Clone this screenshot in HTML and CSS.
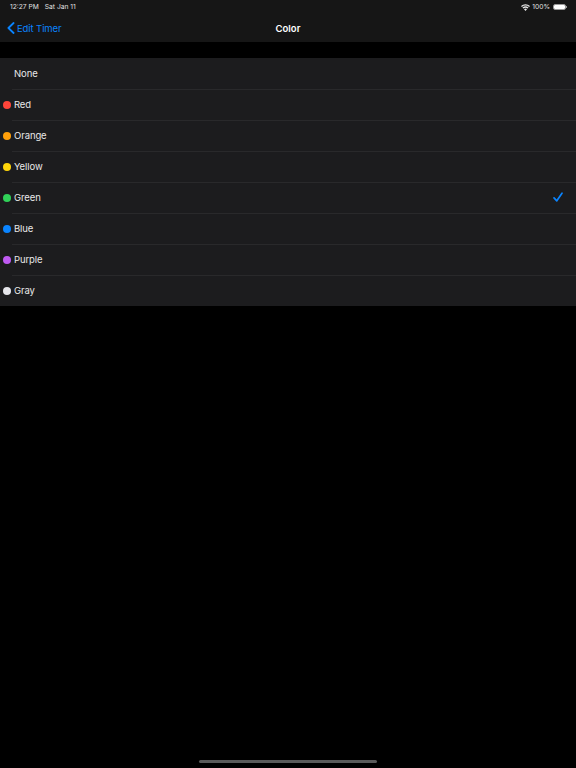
FILE: index.html
```html
<!DOCTYPE html>
<html lang="en">
<head>
<meta charset="utf-8">
<title>Color</title>
<link rel="stylesheet" href="styles.css">
</head>
<body>
<div class="screen">
  <header class="top">
    <div class="status">
      <div class="status-left"><span>12:27 PM</span><span>Sat Jan 11</span></div>
      <div class="status-right">
        <svg class="wifi" width="9" height="7" viewBox="0 0 9 7"><path d="M4.5 7 L3 5.3 A2.2 2.2 0 0 1 6 5.3 Z M2.4 4.6 L1.5 3.6 A4.4 4.4 0 0 1 7.5 3.6 L6.6 4.6 A3.1 3.1 0 0 0 2.4 4.6 Z M0.9 3 L0 2 A6.6 6.6 0 0 1 9 2 L8.1 3 A5.3 5.3 0 0 0 0.9 3 Z" fill="#e6e6e6"/></svg>
        <span>100%</span>
        <span class="battery"><span class="battery-fill"></span></span>
        <span class="battery-cap"></span>
      </div>
    </div>
    <nav class="nav">
      <a class="back">
        <svg width="8" height="12" viewBox="0 0 8 12"><path d="M6.6 1 L1.4 6 L6.6 11" fill="none" stroke="#0a84ff" stroke-width="1.8" stroke-linecap="round" stroke-linejoin="round"/></svg>
        <span>Edit Timer</span>
      </a>
      <h1 class="title">Color</h1>
    </nav>
  </header>
  <ul class="list">
    <li class="row"><span class="dot"></span><span class="label">None</span></li>
    <li class="row"><span class="dot red"></span><span class="label">Red</span></li>
    <li class="row"><span class="dot orange"></span><span class="label">Orange</span></li>
    <li class="row"><span class="dot yellow"></span><span class="label">Yellow</span></li>
    <li class="row"><span class="dot green"></span><span class="label">Green</span>
      <svg class="check" width="10" height="10" viewBox="0 0 10 10"><path d="M1 5.8 L3.8 8.8 L9 1.2" fill="none" stroke="#0a84ff" stroke-width="1.7" stroke-linecap="round" stroke-linejoin="round"/></svg>
    </li>
    <li class="row"><span class="dot blue"></span><span class="label">Blue</span></li>
    <li class="row"><span class="dot purple"></span><span class="label">Purple</span></li>
    <li class="row"><span class="dot gray"></span><span class="label">Gray</span></li>
  </ul>
  <div class="home-bar"></div>
</div>
</body>
</html>
```
FILE: styles.css
```css
* { box-sizing: border-box; margin: 0; padding: 0; }
html, body { width: 576px; height: 768px; background: #000; overflow: hidden; }
body { font-family: Inter, "Liberation Sans", sans-serif; color: #fff; }
.screen { position: relative; width: 576px; height: 768px; }
.top { height: 42px; background: #161616; }
.status { height: 14px; display: flex; justify-content: space-between; align-items: center; padding: 0 9px 0 10px; font-size: 6.7px; color: #e0e0e0; }
.status-left { display: flex; gap: 6px; }
.status-right { display: flex; align-items: center; gap: 2px; }
.battery { width: 13px; height: 6px; border: 1px solid #999; border-radius: 2px; margin-left: 1px; display: block; }
.battery-fill { display: block; width: 100%; height: 100%; background: #fff; border-radius: 1px; }
.battery-cap { width: 1px; height: 2px; background: #999; margin-left: -2px; }
.nav { position: relative; height: 28px; display: flex; align-items: center; justify-content: center; }
.back { position: absolute; left: 7px; top: 8px; display: flex; align-items: center; gap: 2px; color: #0a84ff; font-size: 9.5px; letter-spacing: -0.1px; }
.title { font-size: 9.5px; font-weight: 600; }
.list { list-style: none; margin-top: 16px; background: #1c1c1e; }
.row { height: 31px; display: flex; align-items: center; padding-left: 3px; font-size: 9.5px; letter-spacing: -0.1px; color: #e8e8e8; position: relative; }
.row + .row::before { content: ""; position: absolute; left: 12px; right: 0; top: 0; height: 1px; background: #29292b; }
.dot { width: 8px; height: 8px; border-radius: 50%; margin-right: 3px; flex: none; }
.red { background: #ff453a; }
.orange { background: #ff9f0a; }
.yellow { background: #ffd60a; }
.green { background: #30d158; }
.blue { background: #0a84ff; }
.purple { background: #bf5af2; }
.gray { background: #e5e5ea; }
.check { position: absolute; right: 13px; top: 10px; }
.home-bar { position: absolute; left: 199px; bottom: 5px; width: 178px; height: 3px; border-radius: 2px; background: #5a5a5a; }
```
